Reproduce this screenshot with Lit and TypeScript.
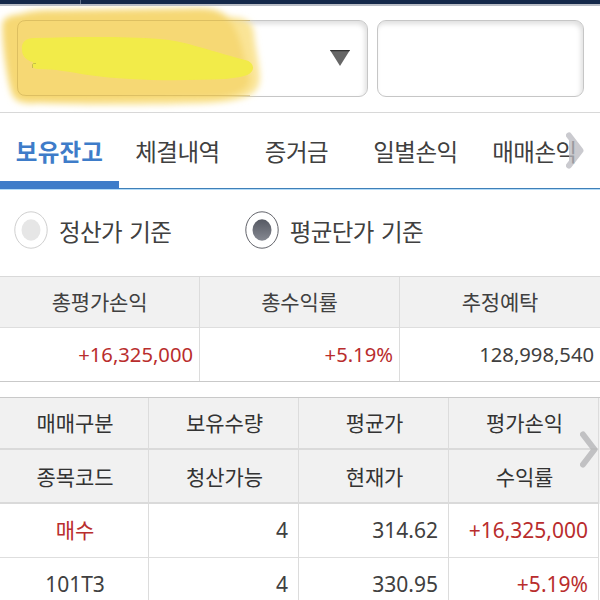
import { html, css, svg, LitElement } from "lit";
import { customElement, property, state } from "lit/decorators.js";
import { classMap } from "lit/directives/class-map.js";

interface Cell {
  text: string;
  align?: string;
  red?: boolean;
}

const TABS = ["보유잔고", "체결내역", "증거금", "일별손익", "매매손익"];

const SUMMARY = [
  { label: "총평가손익", value: "+16,325,000", red: true },
  { label: "총수익률", value: "+5.19%", red: true },
  { label: "추정예탁", value: "128,998,540", red: false },
];

const HEADERS = [
  ["매매구분", "보유수량", "평균가", "평가손익"],
  ["종목코드", "청산가능", "현재가", "수익률"],
];

const ROWS: Cell[][] = [
  [
    { text: "매수", align: "center", red: true },
    { text: "4" },
    { text: "314.62" },
    { text: "+16,325,000", red: true },
  ],
  [
    { text: "101T3", align: "center" },
    { text: "4" },
    { text: "330.95" },
    { text: "+5.19%", red: true },
  ],
];

@customElement("account-select")
export class AccountSelect extends LitElement {
  static styles = css`
    :host {
      display: block;
      position: relative;
      height: 107px;
      box-sizing: border-box;
      padding: 14px 16px 0 17px;
      border-bottom: 1px solid #d8d8d8;
    }

    .fields {
      display: flex;
      gap: 9px;
    }

    .field {
      box-sizing: border-box;
      height: 77px;
      border: 1px solid #c6c6c6;
      border-radius: 9px;
      background: white;
      box-shadow: inset -2px 3px 5px rgba(0, 0, 0, 0.13);
    }

    .account {
      width: 351px;
      display: flex;
      align-items: center;
      justify-content: flex-end;
      padding-right: 17px;
    }

    .password {
      width: 207px;
    }

    .arrow {
      display: block;
      margin-bottom: 1px;
    }

    .marker {
      position: absolute;
      left: 0;
      top: 0;
    }
  `;

  render() {
    return html`
      <div class="fields">
        <div class="field account">
          <svg class="arrow" width="20" height="16" viewBox="0 0 20 16">
            <path d="M0 0H20L10 16Z" fill="#666" />
            <path d="M0 0H20L19.2 1.3H0.8Z" fill="#333" />
          </svg>
        </div>
        <div class="field password"></div>
      </div>
      <svg class="marker" width="280" height="107" viewBox="0 6 280 107">
        <defs>
          <filter id="soft" x="-10%" y="-10%" width="120%" height="120%">
            <feGaussianBlur stdDeviation="3" />
          </filter>
          <filter id="edge"><feGaussianBlur stdDeviation="0.6" /></filter>
        </defs>
        <g filter="url(#soft)">
          <path
            d="M2 25C2 17 10 15 20 14C30 10 40 10 55 10L200 8C215 8 222 12 229 17C245 17 253 22 254 33C255 50 262 73 259 84C256 96 240 100 222 102C200 105 75 106 40 103C22 105 14 103 11 92C6 75 2 45 2 25Z"
            fill="#f9df84"
            fill-opacity="0.85"
          />
          <path
            d="M3 27C3 19 10 16 20 15L45 11L200 9C214 9 222 12 229 20C240 29 245 60 250 80C248 92 232 96 218 98L45 102C22 102 15 100 12 90C7 75 3 45 3 27Z"
            fill="#f6d771"
            fill-opacity="0.9"
          />
        </g>
        <path
          d="M250 20.5H26Q17.5 20.5 17.5 29V87Q17.5 95.500 26 95.500H250"
          fill="none"
          stroke="#b99c45"
          stroke-opacity="0.4"
        />
        <path
          d="M22 50C21 42 26 38 34 38C75 37 120 36 160 39C184 41 204 49 245 60C250 61 253 64 253 68C252 76 242 77 225 79C180 81 130 81 88 75C70 72 55 69 38 69C32 69 32 65 33 62C27 61 22 56 22 50Z"
          fill="#f2eb48"
          filter="url(#edge)"
        />
        <path d="M32.500 68V64.500Q33 63 36 63.500" fill="none" stroke="#b9b545" stroke-width="0.8" />
      </svg>
    `;
  }
}

@customElement("radio-option")
export class RadioOption extends LitElement {
  static styles = css`
    :host {
      display: flex;
      align-items: center;
      gap: 11px;
    }

    .icon {
      display: block;
      flex: none;
    }

    .label {
      font-size: 23.5px;
      letter-spacing: -0.6px;
      word-spacing: 2.5px;
      line-height: 36px;
      padding-top: 2px;
      white-space: nowrap;
    }
  `;

  @property() label = "";
  @property({ type: Boolean }) checked = false;

  render() {
    return html`
      <svg class="icon" width="34" height="38" viewBox="0 0 34 38">
        <defs>
          <linearGradient id="dot" x1="0" y1="0" x2="0" y2="1">
            <stop offset="0" stop-color="#565963" />
            <stop offset="1" stop-color="#858891" />
          </linearGradient>
        </defs>
        <ellipse
          cx="17"
          cy="19"
          rx="16.200"
          ry="18.200"
          fill="white"
          stroke=${this.checked ? "#62636a" : "#cfcfcf"}
          stroke-width="1"
        />
        <ellipse
          cx="17"
          cy="19"
          rx="9.500"
          ry="10.700"
          fill=${this.checked ? "url(#dot)" : "#e6e6e6"}
        />
      </svg>
      <span class="label">${this.label}</span>
    `;
  }
}

@customElement("app-root")
export class AppRoot extends LitElement {
  static styles = css`
    :host {
      display: block;
      position: relative;
      width: 600px;
      height: 600px;
      overflow: hidden;
      background: white;
      color: #404040;
      font-family: "Noto Sans", "Noto Sans CJK KR", sans-serif;
    }

    .topbar {
      display: flex;
      box-sizing: border-box;
      height: 6px;
      background: #14284a;
      border-bottom: 2px solid #b9bdc6;
    }

    .topbar-left {
      width: 80px;
      border-right: 1px solid #60708a;
    }

    .tabs {
      display: flex;
      height: 75px;
      border-bottom: 1px solid #3f80b8;
      box-shadow: 0 1px 0 #b5dcf8;
    }

    .tab {
      box-sizing: border-box;
      width: 119px;
      height: 76px;
      flex: none;
      padding-top: 20px;
      padding-right: 2px;
      text-align: center;
      font-family: "Noto Sans CJK KR", sans-serif;
      font-size: 23.5px;
      line-height: 36px;
      letter-spacing: -0.5px;
      white-space: nowrap;
    }

    .tab.active {
      color: #3e7cc9;
      font-weight: 700;
      letter-spacing: 0.2px;
      padding-right: 0;
      border-bottom: 8px solid #3e7cc9;
    }

    .next {
      position: absolute;
      opacity: 0.75;
    }

    .next-tab {
      left: 563px;
      top: 131px;
    }

    .next-col {
      left: 577px;
      top: 430px;
    }

    .options {
      display: flex;
      gap: 73.5px;
      height: 87px;
      box-sizing: border-box;
      padding: 22px 0 0 14px;
      align-items: flex-start;
      font-family: "Noto Sans CJK KR", sans-serif;
    }

    .summary {
      display: grid;
      grid-template-columns: 200px 200px 200px;
      border-top: 1px solid #d9d9d9;
      border-bottom: 1px solid #c9c9c9;
      margin-bottom: 15px;
    }

    .summary-item {
      border-right: 1px solid #dcdcdc;
    }

    .summary-item:last-child {
      border-right: none;
    }

    .summary-label {
      height: 50px;
      line-height: 48px;
      background: #f1f1f1;
      border-bottom: 1px solid #dedede;
      text-align: center;
      font-family: "Noto Sans CJK KR", sans-serif;
      font-size: 21px;
      letter-spacing: -0.2px;
    }

    .summary-value {
      height: 53px;
      line-height: 52px;
      padding-right: 6px;
      text-align: right;
      font-size: 20.2px;
    }

    .holdings {
      border-top: 1px solid #c9c9c9;
    }

    .row {
      display: grid;
      grid-template-columns: 149px 150px 150px 150px;
    }

    .head {
      background: #f1f1f1;
      color: #333;
    }

    .cell {
      box-sizing: border-box;
      height: 54px;
      line-height: 53px;
      border-right: 1px solid #dcdcdc;
      border-bottom: 1px solid #dedede;
      padding-right: 10px;
      text-align: right;
      font-size: 21px;
      white-space: nowrap;
    }

    .head .cell {
      border-bottom: 2px solid #dadada;
      height: 54px;
      line-height: 52px;
      font-family: "Noto Sans CJK KR", sans-serif;
      letter-spacing: -0.1px;
    }

    .head:first-child .cell {
      height: 52px;
      line-height: 49px;
    }

    .cell.center {
      text-align: center;
      padding-left: 2px;
      padding-right: 0;
    }

    .red {
      color: #b92d2d;
    }
  `;

  @state() private activeTab = 0;
  @state() private basis = 1;

  _selectTab(index: number) {
    this.activeTab = index;
  }

  _selectBasis(index: number) {
    this.basis = index;
  }

  render() {
    return html`
      <div class="topbar"><div class="topbar-left"></div></div>
      <account-select></account-select>

      <div class="tabs">
        ${TABS.map(
          (tab, i) => html`
            <div
              class=${classMap({ tab: true, active: i === this.activeTab })}
              @click=${() => this._selectTab(i)}
            >${tab}</div>
          `
        )}
      </div>

      <div class="options">
        ${["정산가 기준", "평균단가 기준"].map(
          (label, i) => html`
            <radio-option
              label=${label}
              ?checked=${i === this.basis}
              @click=${() => this._selectBasis(i)}
            ></radio-option>
          `
        )}
      </div>

      <div class="summary">
        ${SUMMARY.map(
          (item) => html`
            <div class="summary-item">
              <div class="summary-label">${item.label}</div>
              <div class=${classMap({ "summary-value": true, red: item.red })}>${item.value}</div>
            </div>
          `
        )}
      </div>

      <div class="holdings">
        ${HEADERS.map(
          (labels) => html`
            <div class="row head">
              ${labels.map((label) => html`<div class="cell center">${label}</div>`)}
            </div>
          `
        )}
        ${ROWS.map(
          (cells) => html`
            <div class="row">
              ${cells.map(
                (cell) => html`
                  <div
                    class=${classMap({
                      cell: true,
                      center: cell.align === "center",
                      red: !!cell.red,
                    })}
                  >${cell.text}</div>
                `
              )}
            </div>
          `
        )}
      </div>

      ${this._chevron("next-tab", true)}
      ${this._chevron("next-col", false)}
    `;
  }

  _chevron(name: string, filled: boolean) {
    return html`
      <svg class="next ${name}" width="24" height="38" viewBox="0 0 24 38">
        ${filled ? svg`<path d="M6 5L17.500 19.500L6 34Z" fill="#b9b9bf" />` : ""}
        <path
          d="M6 4.500L17.500 19.500L6 34.500"
          fill="none"
          stroke=${filled ? "#b9b9bf" : "#b2b2b4"}
          stroke-width="6"
          stroke-linecap="round"
          stroke-linejoin="round"
        />
      </svg>
    `;
  }
}
